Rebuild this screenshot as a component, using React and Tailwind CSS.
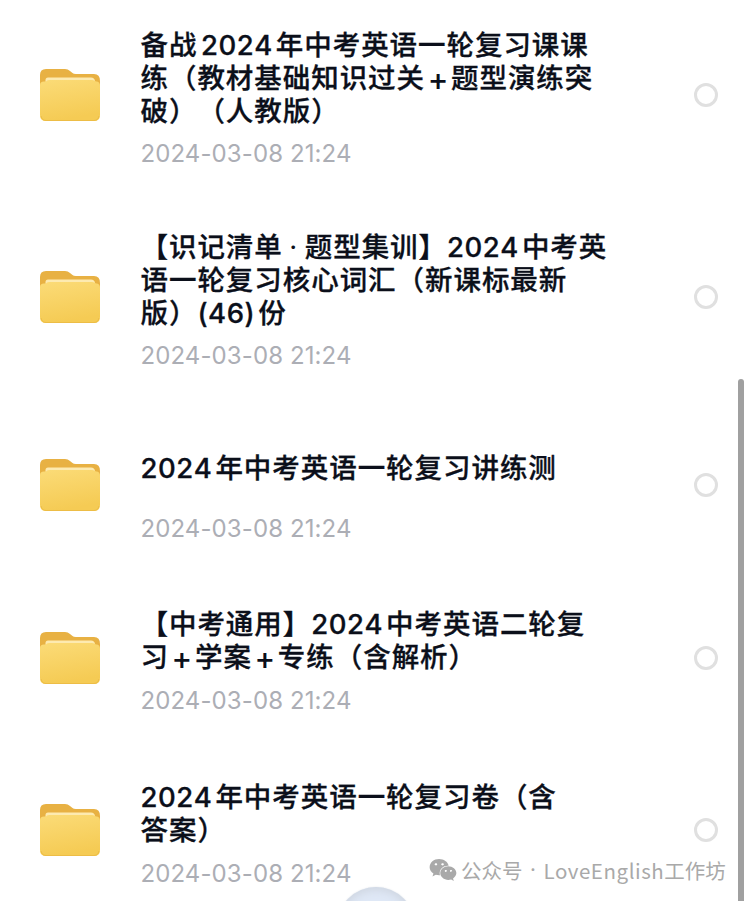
import clsx from "clsx";
import { FaWeixin } from "react-icons/fa";

const FILES = [
  {
    lines: ["备战2024年中考英语一轮复习课课", "练（教材基础知识过关+题型演练突", "破）（人教版）"],
    date: "2024-03-08 21:24",
  },
  {
    lines: ["【识记清单·题型集训】2024中考英", "语一轮复习核心词汇（新课标最新", "版）(46)份"],
    date: "2024-03-08 21:24",
  },
  {
    lines: ["2024年中考英语一轮复习讲练测"],
    date: "2024-03-08 21:24",
  },
  {
    lines: ["【中考通用】2024中考英语二轮复", "习+学案+专练（含解析）"],
    date: "2024-03-08 21:24",
  },
  {
    lines: ["2024年中考英语一轮复习卷（含", "答案）"],
    date: "2024-03-08 21:24",
  },
];

const FolderIcon = () => (
  <svg width="60" height="54" viewBox="0 0 60 54" className="shrink-0">
    <defs>
      <linearGradient id="folder-front" x1="0" y1="0" x2="0.25" y2="1">
        <stop offset="0" stopColor="#fbdb77" />
        <stop offset="1" stopColor="#f5cb54" />
      </linearGradient>
    </defs>
    <path
      d="M0 7Q0 1 6 1H25Q28 1 30 3L32.500 5Q33.500 6 36 6H54Q60 6 60 13V24H0Z"
      fill="#e8b143"
    />
    <path d="M5.500 16V12Q5.500 9.500 8 9.500H51Q54.500 9.500 55 13V18H5.500Z" fill="#fdeab0" />
    <path
      d="M0 17Q0 13.500 4 13.500H6Q6.500 12 9 12H52Q54.500 12 56 13.500H57Q60 14 60 18V47Q60 53 54 53H6Q0 53 0 47Z"
      fill="url(#folder-front)"
    />
    <path d="M1 48Q2 52.500 6 52.500H54Q58 52.500 59 48" fill="none" stroke="#edbd46" />
  </svg>
);

// Latin runs sit in tighter tracking and get a small gap next to a Han character
const TitleLine = ({ text }) => {
  const parts = text.match(/[\x20-\x7e]+|·|[^\x20-\x7e·]+/g);

  return (
    <span className="flex whitespace-nowrap">
      {parts.map((part, i) => {
        const isPlus = part === "+";
        const isDot = part === "·";
        const isLatin = !isPlus && /^[\x20-\x7e]/.test(part);
        const prev = parts[i - 1];
        const afterBracket = prev && /[）】]$/.test(prev);

        return (
          <span
            key={i}
            className={clsx(
              isLatin && "mr-[3px] font-medium tracking-[0.55px] [-webkit-text-stroke:0.3px]",
              isLatin && prev && !afterBracket && "ml-[3.5px]",
              isPlus && "w-[26px] text-center text-[31px] font-medium tracking-normal",
              isDot && "w-[22px] text-center",
              !isLatin && !isPlus && !isDot && "font-medium [-webkit-text-stroke:0.3px]"
            )}
          >
            {part}
          </span>
        );
      })}
    </span>
  );
};

const FileRow = ({ file }) => (
  <li
    className={clsx(
      "flex shrink-0 items-center pl-10 pr-8",
      file.lines.length > 2 ? "h-[202px]" : "h-[172.5px] pt-[1.5px]"
    )}
  >
    <FolderIcon />
    <div className="ml-[40.5px] flex-1">
      <div className="flex min-h-[68px] flex-col justify-center text-[27.5px] leading-[33px] tracking-[0.95px] text-[#0b0f1a] [font-kerning:none] [text-spacing-trim:space-all]">
        {file.lines.map((line) => (
          <TitleLine key={line} text={line} />
        ))}
      </div>
      <p className="mt-[18px] text-[24px] leading-[15px] tracking-[0.1px] text-[#acaeb5]">{file.date}</p>
    </div>
    <span className="h-6 w-6 shrink-0 rounded-full border-[3px] border-[#e0e0e0]" />
  </li>
);

const App = () => {
  return (
    <div className="relative h-[901px] w-[750px] overflow-hidden bg-white font-[Inter,'Noto_Sans_CJK_SC',sans-serif]">
      <ul className="-mt-1.5 flex flex-col">
        {FILES.map((file) => (
          <FileRow key={file.lines[0]} file={file} />
        ))}
      </ul>

      <div className="absolute bottom-0 right-[6px] top-[379px] w-1.5 rounded-t-full bg-[#a0a0a0]" />

      <div className="absolute left-[337px] top-[887px] h-[78px] w-[78px] rounded-full bg-[#dfe8f6] shadow-[inset_0_0_8px_3px_#cfd6e1,0_0_2px_#e3e6ea]" />

      <div className="absolute left-[429px] top-[855px] flex items-center whitespace-nowrap text-[20.5px] leading-[30px] text-[#a9a9a9] font-['Noto_Sans_CJK_SC',sans-serif]">
        <FaWeixin className="h-7 w-7" />
        <span className="ml-1">公众号</span>
        <span className="w-[21px] text-center font-[Inter]">·</span>
        <span className="tracking-[0.55px]">LoveEnglish</span>
        <span>工作坊</span>
      </div>
    </div>
  );
};

export default App;
